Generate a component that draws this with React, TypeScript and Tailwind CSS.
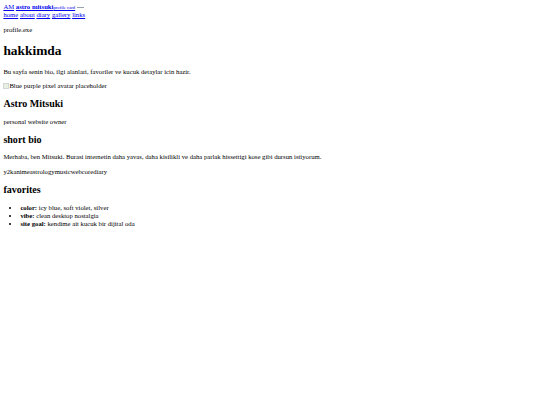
export default function App() {
  return (
    <div className="m-[3.4px] font-['Liberation_Serif',serif] text-[6.7px] leading-[1.2] text-black">
      <header>
        <div>
          <a href="#" className="text-[#0000ee] underline">AM</a>{" "}
          <a href="#" className="text-[#0000ee] underline font-bold">astro mitsuki</a>
          <a href="#" className="text-[#0000ee] underline text-[4.7px]">profile card</a>{" "}
          <span className="inline-block w-[7px] h-[1px] bg-gray-400 align-middle"></span>
        </div>
        <nav>
          <a href="#" className="text-[#0000ee] underline">home</a>{" "}
          <a href="#" className="text-[#0000ee] underline">about</a>{" "}
          <a href="#" className="text-[#0000ee] underline">diary</a>{" "}
          <a href="#" className="text-[#0000ee] underline">gallery</a>{" "}
          <a href="#" className="text-[#0000ee] underline">links</a>
        </nav>
      </header>
      <main>
        <p className="my-[1em]">profile.exe</p>
        <h1 className="text-[2em] leading-[normal] font-bold my-[0.67em]">hakkimda</h1>
        <p className="my-[1em]">Bu sayfa senin bio, ilgi alanlari, favoriler ve kucuk detaylar icin hazir.</p>
        <div className="flex items-center -mt-[1px]">
          <span className="inline-block w-[6px] h-[6px] border border-gray-300 bg-[#e8f0e0]"></span>
          <span>Blue purple pixel avatar placeholder</span>
        </div>
        <h2 className="text-[1.5em] leading-[normal] font-bold my-[0.83em]">Astro Mitsuki</h2>
        <p className="my-[1em]">personal website owner</p>
        <h2 className="text-[1.5em] leading-[normal] font-bold my-[0.83em]">short bio</h2>
        <p className="my-[1em]">Merhaba, ben Mitsuki. Burasi internetin daha yavas, daha kisilikli ve daha parlak hissettigi kose gibi dursun istiyorum.</p>
        <div>
          <span>y2k</span><span>anime</span><span>astrology</span><span>music</span><span>webcore</span><span>diary</span>
        </div>
        <h2 className="text-[1.5em] leading-[normal] font-bold my-[0.83em]">favorites</h2>
        <ul className="my-[1em] pl-[17px] list-disc">
          <li><strong>color:</strong> icy blue, soft violet, silver</li>
          <li><strong>vibe:</strong> clean desktop nostalgia</li>
          <li><strong>site goal:</strong> kendime ait kucuk bir dijital oda</li>
        </ul>
      </main>
    </div>
  );
}
